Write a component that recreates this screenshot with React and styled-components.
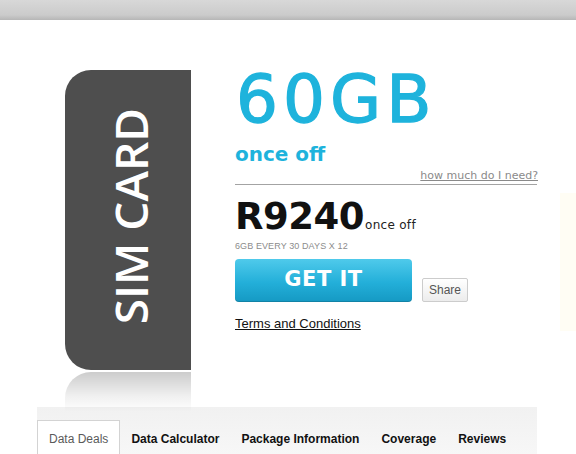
import React from "react";
import styled, { createGlobalStyle } from "styled-components";

const GlobalStyle = createGlobalStyle`
  html, body {
    margin: 0;
    padding: 0;
    background: #ffffff;
    overflow: hidden;
  }
  body {
    font-family: "Liberation Sans", Arial, sans-serif;
  }
`;

const cyan = "#1eb3dc";

const Page = styled.div`
  width: 576px;
  height: 454px;
  overflow: hidden;
`;

const TopBar = styled.div`
  height: 20px;
  background: linear-gradient(#d8d8d8, #cbcbcb 75%, #b6b6b6);
`;

const Main = styled.div`
  display: flex;
  align-items: flex-start;
  padding-top: 50px;
  height: 336px;
`;

const SimColumn = styled.div`
  margin-left: 65px;
  width: 126px;
  flex-shrink: 0;
  display: flex;
  flex-direction: column;
`;

const SimCard = styled.div`
  height: 300px;
  background: #4e4e4e;
  border-radius: 26px 0 0 26px;
  display: flex;
  align-items: center;
  justify-content: center;
`;

const SimLabel = styled.span`
  writing-mode: vertical-rl;
  transform: rotate(180deg);
  color: #ffffff;
  font-family: "Open Sans", sans-serif;
  font-weight: 600;
  font-size: 46px;
  line-height: 1;
  margin-top: -8px;
  margin-left: 4px;
  white-space: nowrap;
`;

const Reflection = styled.div`
  margin-top: 2px;
  height: 40px;
  border-radius: 26px 0 0 0;
  background: linear-gradient(rgba(0, 0, 0, 0.2), rgba(0, 0, 0, 0.06) 60%, rgba(0, 0, 0, 0));
`;

const Info = styled.div`
  margin-left: 44px;
  width: 302px;
  flex-shrink: 0;
  display: flex;
  flex-direction: column;
`;

const Volume = styled.div`
  font-family: "DejaVu Sans", sans-serif;
  font-size: 66px;
  line-height: 66px;
  color: ${cyan};
  margin-top: -3px;
  margin-left: 1px;
  letter-spacing: 5px;
  -webkit-text-stroke: 1.3px ${cyan};
`;

const Period = styled.div`
  font-family: "DejaVu Sans", sans-serif;
  font-weight: bold;
  font-size: 20px;
  line-height: 20px;
  color: ${cyan};
  margin-top: 11px;
`;

const HelpLink = styled.a`
  align-self: flex-end;
  margin-right: -1px;
  font-family: "DejaVu Sans", sans-serif;
  font-size: 11px;
  line-height: 13px;
  color: #8a8a8a;
  text-decoration: underline;
  margin-top: 5px;
`;

const Rule = styled.div`
  height: 1px;
  background: #a3a3a3;
  margin-top: 2px;
`;

const PriceRow = styled.div`
  display: flex;
  align-items: baseline;
  margin-top: 13px;
`;

const Price = styled.span`
  font-family: "DejaVu Sans", sans-serif;
  font-weight: bold;
  font-size: 37px;
  line-height: 37px;
  color: #111111;
  letter-spacing: -0.5px;
`;

const PriceNote = styled.span`
  font-family: "DejaVu Sans", sans-serif;
  font-size: 12px;
  color: #222222;
  margin-left: 1px;
  letter-spacing: 0.3px;
`;

const Schedule = styled.div`
  font-size: 9px;
  line-height: 10px;
  color: #8c8c8c;
  margin-top: 6px;
  letter-spacing: 0.1px;
`;

const Actions = styled.div`
  display: flex;
  align-items: flex-end;
  gap: 10px;
  margin-top: 8px;
`;

const GetButton = styled.button`
  width: 177px;
  height: 43px;
  border: none;
  border-radius: 4px;
  background: linear-gradient(#4fcaeb, #23afd9 55%, #1599c3);
  box-shadow: inset 0 -1px 0 rgba(0, 0, 0, 0.15);
  color: #ffffff;
  font-family: "DejaVu Sans", sans-serif;
  font-weight: bold;
  font-size: 21px;
  letter-spacing: 0.5px;
  padding: 0 0 4px 0;
  cursor: pointer;
`;

const ShareButton = styled.button`
  width: 46px;
  height: 24px;
  border: 1px solid #cccccc;
  border-radius: 2px;
  background: linear-gradient(#ffffff, #ececec);
  color: #555555;
  font-family: "Liberation Sans", Arial, sans-serif;
  font-size: 12px;
  padding: 0;
`;

const Terms = styled.a`
  font-family: "Liberation Sans", Arial, sans-serif;
  font-size: 13px;
  line-height: 14px;
  color: #111111;
  text-decoration: underline;
  margin-top: 15px;
`;

const Aside = styled.div`
  margin-left: 23px;
  margin-top: 123px;
  width: 30px;
  height: 138px;
  background: #fffdf4;
  flex-shrink: 0;
`;

const TabBar = styled.div`
  margin-left: 37px;
  width: 500px;
  height: 47px;
  margin-top: 1px;
  background: linear-gradient(#f1f1f1, #f7f7f7);
  display: flex;
  align-items: flex-end;
`;

const Tab = styled.div`
  height: 34px;
  padding: 2px ${(p) => (p.$active ? "11px" : "10px")} 0;
  box-sizing: border-box;
  display: flex;
  align-items: center;
  font-size: 12px;
  white-space: nowrap;
  font-weight: ${(p) => (p.$active ? "normal" : "bold")};
  color: ${(p) => (p.$active ? "#5a5a5a" : "#111111")};
  background: ${(p) => (p.$active ? "#ffffff" : "transparent")};
  border: 1px solid ${(p) => (p.$active ? "#d3d3d3" : "transparent")};
  border-bottom: none;
`;

const tabs = ["Data Deals", "Data Calculator", "Package Information", "Coverage", "Reviews"];

export default function App() {
  return (
    <Page>
      <GlobalStyle />
      <TopBar />
      <Main>
        <SimColumn>
          <SimCard>
            <SimLabel>SIM CARD</SimLabel>
          </SimCard>
          <Reflection />
        </SimColumn>
        <Info>
          <Volume>60GB</Volume>
          <Period>once off</Period>
          <HelpLink>how much do I need?</HelpLink>
          <Rule />
          <PriceRow>
            <Price>R9240</Price>
            <PriceNote>once off</PriceNote>
          </PriceRow>
          <Schedule>6GB EVERY 30 DAYS X 12</Schedule>
          <Actions>
            <GetButton>GET IT</GetButton>
            <ShareButton>Share</ShareButton>
          </Actions>
          <Terms>Terms and Conditions</Terms>
        </Info>
        <Aside />
      </Main>
      <TabBar>
        {tabs.map((t, i) => (
          <Tab key={t} $active={i === 0}>
            {t}
          </Tab>
        ))}
      </TabBar>
    </Page>
  );
}
